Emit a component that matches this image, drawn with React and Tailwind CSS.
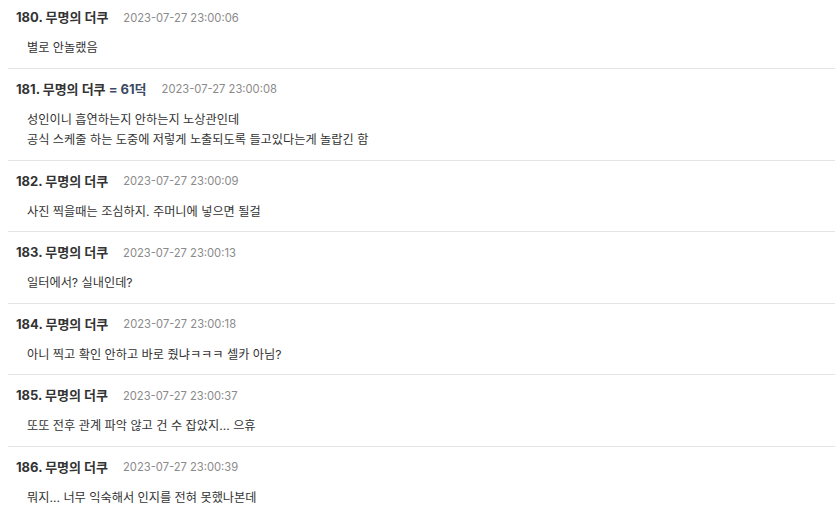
import React from 'react';

const comments = [
    { no: 180, date: '2023-07-27 23:00:06', lines: ['별로 안놀랬음'] },
    {
        no: 181,
        extra: '= 61덕',
        date: '2023-07-27 23:00:08',
        lines: ['성인이니 흡연하는지 안하는지 노상관인데', '공식 스케줄 하는 도중에 저렇게 노출되도록 들고있다는게 놀랍긴 함'],
    },
    { no: 182, date: '2023-07-27 23:00:09', lines: ['사진 찍을때는 조심하지. 주머니에 넣으면 될걸'] },
    { no: 183, date: '2023-07-27 23:00:13', lines: ['일터에서? 실내인데?'] },
    { no: 184, date: '2023-07-27 23:00:18', lines: ['아니 찍고 확인 안하고 바로 줬냐ㅋㅋㅋ 셀카 아님?'] },
    { no: 185, date: '2023-07-27 23:00:37', lines: ['또또 전후 관계 파악 않고 건 수 잡았지... 으휴'] },
    { no: 186, date: '2023-07-27 23:00:39', lines: ['뭐지... 너무 익숙해서 인지를 전혀 못했나본데'] },
];

export default function App() {
    return (
        <div className="w-[835px] h-[512px] overflow-hidden bg-white font-['Inter','Noto_Sans_CJK_KR',sans-serif]">
            <ul className="mt-[-3px] pl-2">
                {comments.map((c) => (
                    <li key={c.no} className="border-b border-[#e5e5e5] pt-[12px] pb-[9px]">
                        {/* Header */}
                        <div className="flex items-center h-[18px] pl-2">
                            <span className="text-[13px] font-bold text-[#333]">
                                {c.no}. 무명의 더쿠
                                {c.extra && <span className="text-[#3c4a63]"> {c.extra}</span>}
                            </span>
                            <span className="ml-[15px] text-[11.2px] text-[#8a8a8a]">{c.date}</span>
                        </div>
                        {/* Body */}
                        <div className="mt-[11px] pl-[19px] text-[12.2px] leading-[20.5px] text-[#333]">
                            {c.lines.map((l, i) => (
                                <p key={i}>{l}</p>
                            ))}
                        </div>
                    </li>
                ))}
            </ul>
        </div>
    );
}
